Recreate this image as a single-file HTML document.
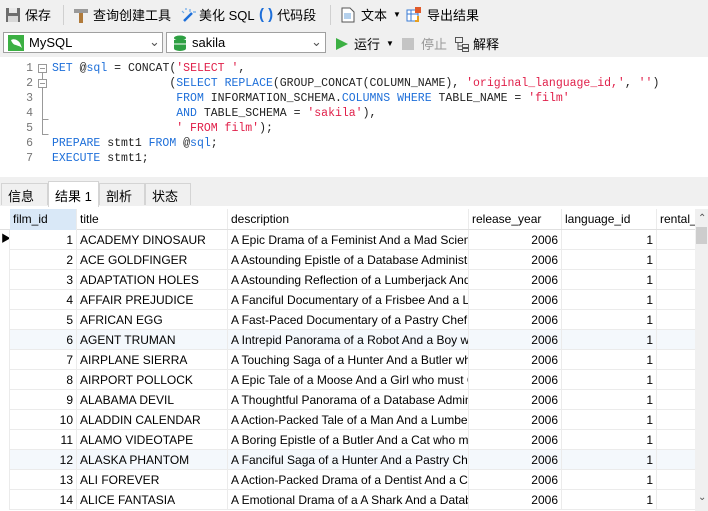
<!DOCTYPE html>
<html><head><meta charset="utf-8"><style>
*{margin:0;padding:0;box-sizing:border-box}
body{width:708px;height:511px;overflow:hidden;background:#f0f0f0;font-family:"Liberation Sans","Noto Sans CJK SC",sans-serif;font-size:12px;color:#000;position:relative}
.abs{position:absolute}
.tb{position:absolute;top:0;height:29px;display:flex;align-items:center;font-size:13px}
.sel{position:absolute;top:32px;height:21px;border:1px solid #a0a0a0;background:#fff;font-size:13px}
.ed{position:absolute;left:0;top:57px;width:708px;height:120px;background:#fff;font-family:"Liberation Mono",monospace;font-size:11.5px}
.ln{position:absolute;left:0;width:33px;text-align:right;color:#777;background:#fff}
.cl{position:absolute;left:52px;white-space:pre;color:#222}
.k{color:#1e6fd9}.s{color:#e0204a}
.tab{position:absolute;top:183px;height:22px;border:1px solid #d4d4d4;border-bottom:none;font-size:13px;padding:2px 0 0 6px;background:#f0f0f0}
.grid{position:absolute;left:0;top:206px;width:708px;height:305px;background:#fff;overflow:hidden}
.row{position:absolute;left:0;height:20px;width:695px;border-bottom:1px solid #ebebeb}
.c{position:absolute;top:0;height:20px;line-height:20px;border-right:1px solid #ebebeb;padding:0 3px;white-space:nowrap;overflow:hidden;font-size:12px}
.r{text-align:right}
</style></head><body>
<div class="tb" style="left:5px">
<svg width="16" height="16"><rect x="1" y="1" width="14" height="14" fill="#6d6d6d"/><rect x="4" y="1" width="8" height="5" fill="#e8e8e8"/><rect x="3" y="9" width="10" height="6" fill="#d8d8d8"/></svg><span style="margin-left:4px">保存</span></div>
<div class="abs" style="left:63px;top:5px;width:1px;height:20px;background:#d0d0d0"></div>
<div class="tb" style="left:73px"><svg width="16" height="16"><rect x="1" y="2" width="14" height="4" fill="#9a9a9a"/><rect x="6" y="6" width="4" height="10" fill="#b07a3a"/></svg><span style="margin-left:4px">查询创建工具</span></div>
<div class="tb" style="left:180px"><svg width="16" height="16"><path d="M4 14 L12 6" stroke="#1e6fd9" stroke-width="2.5"/><path d="M10 2v3M13 5h3M2 4l2 2M6 1v2" stroke="#6aa8e8" stroke-width="1.2"/></svg><span style="margin-left:3px">美化 SQL</span></div>
<div class="tb" style="left:259px"><span style="color:#1e6fd9;font-weight:bold;font-size:15px">( )</span><span style="margin-left:4px">代码段</span></div>
<div class="abs" style="left:330px;top:5px;width:1px;height:20px;background:#d0d0d0"></div>
<div class="tb" style="left:341px"><svg width="14" height="16"><path d="M1 1h8l4 4v10H1z" fill="#fff" stroke="#555"/><path d="M3 7h7M3 9h7M3 11h7" stroke="#6aa0d8"/></svg><span style="margin-left:6px">文本</span><span style="margin-left:6px;font-size:8px">▼</span></div>
<div class="tb" style="left:406px"><svg width="16" height="16"><rect x="1" y="3" width="11" height="11" fill="#fff" stroke="#3a7bd5"/><path d="M1 7h11M5 3v11" stroke="#3a7bd5"/><rect x="9" y="0" width="6" height="6" fill="#e05a2a"/><path d="M12 9v5h-3" stroke="#e8a020" stroke-width="2" fill="none"/></svg><span style="margin-left:5px">导出结果</span></div>
<div class="sel" style="left:3px;width:160px"><svg class="abs" style="left:4px;top:2px" width="16" height="16"><rect width="16" height="16" fill="#3cb043"/><path d="M3 5c3-2 7 0 9 3l2 5c-2-2-4-2-6-3-2 0-4-2-5-5z" fill="#fff"/></svg><span class="abs" style="left:25px;top:2px">MySQL</span><span class="abs" style="left:145px;top:1px;color:#555">⌄</span></div>
<div class="sel" style="left:166px;width:160px"><svg class="abs" style="left:6px;top:2px" width="14" height="16"><ellipse cx="7" cy="3" rx="6" ry="2.5" fill="#2ea043"/><rect x="1" y="5" width="12" height="3.5" fill="#2ea043"/><rect x="1" y="9.5" width="12" height="3.5" fill="#2ea043"/><ellipse cx="7" cy="13.5" rx="6" ry="2.5" fill="#2ea043"/></svg><span class="abs" style="left:25px;top:2px">sakila</span><span class="abs" style="left:144px;top:1px;color:#555">⌄</span></div>
<div class="tb" style="left:335px;top:30px;height:27px"><svg width="14" height="14"><path d="M1 1L13 7L1 13z" fill="#3cb043"/></svg><span style="margin-left:5px">运行</span><span style="margin-left:6px;font-size:8px">▼</span></div>
<div class="tb" style="left:402px;top:30px;height:27px;color:#999"><span style="display:inline-block;width:12px;height:12px;background:#c4c4c4"></span><span style="margin-left:7px">停止</span></div>
<div class="tb" style="left:454px;top:30px;height:27px"><svg width="16" height="16" fill="none" stroke="#555"><rect x="1.5" y="1.5" width="7" height="5"/><rect x="8.5" y="8.5" width="6" height="3"/><rect x="8.5" y="12.5" width="6" height="3"/><path d="M4 6.5v7h4.5M4 10h4.5"/></svg><span style="margin-left:3px">解释</span></div>
<div class="ed">
<div class="ln" style="top:5px">1</div><div class="ln" style="top:20px">2</div><div class="ln" style="top:35px">3</div><div class="ln" style="top:50px">4</div><div class="ln" style="top:65px">5</div><div class="ln" style="top:80px">6</div><div class="ln" style="top:95px">7</div>
<svg class="abs" style="left:38px;top:5px" width="12" height="80" fill="none" stroke="#999"><rect x="0.5" y="2.5" width="8" height="8"/><path d="M2 6.5h5"/><rect x="0.5" y="17.5" width="8" height="8"/><path d="M2 21.5h5M4.5 10.5v7M4.5 25.5v47h6M4.5 57.5h6"/></svg>
<div class="cl" style="top:5px"><span class="k">SET</span> @<span class="k">sql</span> = CONCAT(<span class="s">'SELECT '</span>,</div>
<div class="cl" style="top:20px">                 (<span class="k">SELECT</span> <span class="k">REPLACE</span>(GROUP_CONCAT(COLUMN_NAME), <span class="s">'original_language_id,'</span>, <span class="s">''</span>)</div>
<div class="cl" style="top:35px">                  <span class="k">FROM</span> INFORMATION_SCHEMA.<span class="k">COLUMNS</span> <span class="k">WHERE</span> TABLE_NAME = <span class="s">'film'</span></div>
<div class="cl" style="top:50px">                  <span class="k">AND</span> TABLE_SCHEMA = <span class="s">'sakila'</span>),</div>
<div class="cl" style="top:65px">                  <span class="s">' FROM film'</span>);</div>
<div class="cl" style="top:80px"><span class="k">PREPARE</span> stmt1 <span class="k">FROM</span> @<span class="k">sql</span>;</div>
<div class="cl" style="top:95px"><span class="k">EXECUTE</span> stmt1;</div>
</div>
<div class="tab" style="left:1px;width:47px">信息</div>
<div class="tab" style="left:48px;top:181px;height:26px;width:51px;background:#fff;z-index:2;padding-top:4px">结果 1</div>
<div class="tab" style="left:99px;width:46px">剖析</div>
<div class="tab" style="left:145px;width:46px">状态</div>
<div class="grid">
<div class="row" style="top:3px;height:21px;border-bottom:1px solid #e0e0e0">
<div class="c" style="left:10px;width:67px;background:#d9e8f7;height:21px;line-height:21px">film_id</div>
<div class="c" style="left:77px;width:151px;line-height:21px">title</div>
<div class="c" style="left:228px;width:241px;line-height:21px">description</div>
<div class="c" style="left:469px;width:93px;line-height:21px">release_year</div>
<div class="c" style="left:562px;width:95px;line-height:21px">language_id</div>
<div class="c" style="left:657px;width:38px;line-height:21px;border:none">rental_</div>
</div>
<div class="abs" style="left:695px;top:3px;width:13px;height:302px;background:#f0f0f0"></div>
<div class="abs" style="left:698px;top:7px;font-size:10px;color:#555">⌃</div>
<div class="abs" style="left:696px;top:21px;width:11px;height:17px;background:#cdcdcd"></div>
<div class="abs" style="left:698px;top:286px;font-size:10px;color:#555">⌄</div>
<div id="rows"></div>
</div>
<script>
var d=[["ACADEMY DINOSAUR","A Epic Drama of a Feminist And a Mad Scientist"],["ACE GOLDFINGER","A Astounding Epistle of a Database Administrator"],["ADAPTATION HOLES","A Astounding Reflection of a Lumberjack And"],["AFFAIR PREJUDICE","A Fanciful Documentary of a Frisbee And a Lumberjack"],["AFRICAN EGG","A Fast-Paced Documentary of a Pastry Chef And"],["AGENT TRUMAN","A Intrepid Panorama of a Robot And a Boy who"],["AIRPLANE SIERRA","A Touching Saga of a Hunter And a Butler who"],["AIRPORT POLLOCK","A Epic Tale of a Moose And a Girl who must Con"],["ALABAMA DEVIL","A Thoughtful Panorama of a Database Administrator"],["ALADDIN CALENDAR","A Action-Packed Tale of a Man And a Lumberjack"],["ALAMO VIDEOTAPE","A Boring Epistle of a Butler And a Cat who must"],["ALASKA PHANTOM","A Fanciful Saga of a Hunter And a Pastry Chef"],["ALI FOREVER","A Action-Packed Drama of a Dentist And a Crocodile"],["ALICE FANTASIA","A Emotional Drama of a A Shark And a Database"]];
var h="";
d.forEach(function(r,i){var bg=(i==5||i==11)?"#f4f8fc":"#fff";
h+='<div class="row" style="top:'+(24+i*20)+'px;background:'+bg+'">'+
'<div class="c" style="left:0;width:10px;padding:0;background:#fff">'+(i==0?'<span style="font-size:10px;position:absolute;left:1px">▶</span>':'')+'</div>'+
'<div class="c r" style="left:10px;width:67px">'+(i+1)+'</div>'+
'<div class="c" style="left:77px;width:151px">'+r[0]+'</div>'+
'<div class="c" style="left:228px;width:241px">'+r[1]+'</div>'+
'<div class="c r" style="left:469px;width:93px">2006</div>'+
'<div class="c r" style="left:562px;width:95px">1</div>'+
'<div class="c" style="left:657px;width:38px;border:none"></div></div>';});
document.getElementById("rows").innerHTML=h;
</script>
</body></html>
